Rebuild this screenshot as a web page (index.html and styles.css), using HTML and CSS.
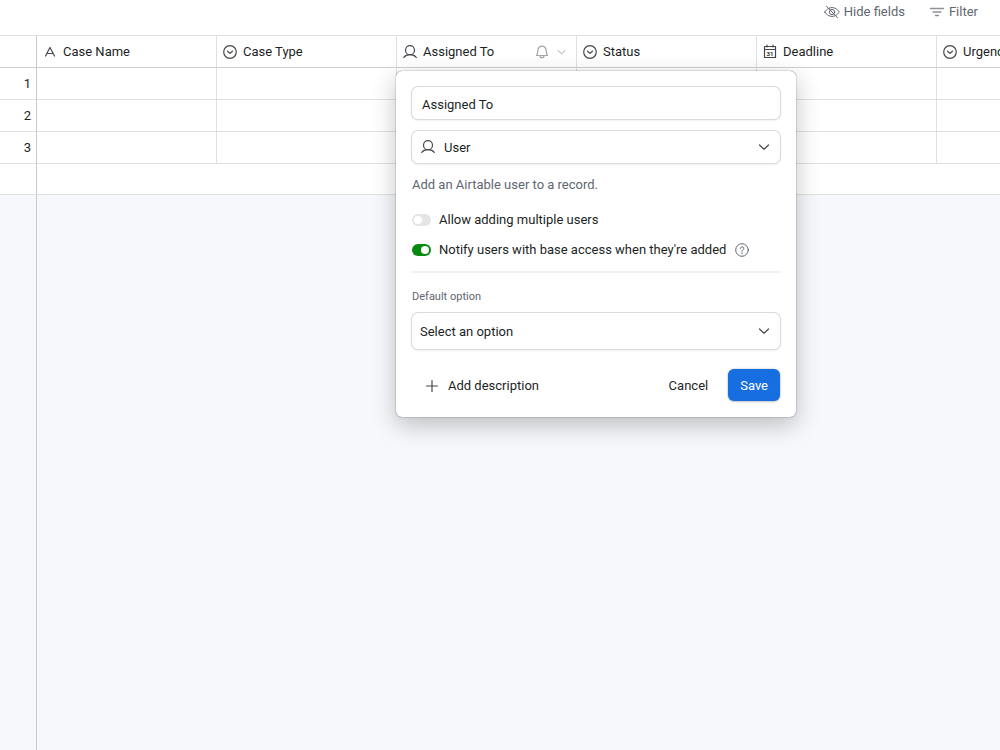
FILE: index.html
```html
<!DOCTYPE html>
<html lang="en">
<head>
    <meta charset="UTF-8">
    <meta name="viewport" content="width=device-width, initial-scale=1.0">
    <title>Cases</title>
    <link rel="stylesheet" href="styles.css">
</head>
<body>
    <!-- shared icons -->
    <svg class="sprite" aria-hidden="true">
        <symbol id="icon-select" viewBox="0 0 16 16">
            <circle cx="8" cy="8" r="6.3"/>
            <path d="M5.5 7.2 8 9.4l2.5-2.2"/>
        </symbol>
        <symbol id="icon-user" viewBox="0 0 16 16">
            <circle cx="8" cy="6.2" r="4.5"/>
            <path d="M1.7 13.5C3 11.6 5.2 10.7 8 10.7s5 .9 6.3 2.8"/>
        </symbol>
        <symbol id="icon-chevron" viewBox="0 0 16 16">
            <path d="M3.5 6 8 10.2 12.5 6"/>
        </symbol>
    </svg>

    <header class="toolbar">
        <button class="tool">
            <svg class="icon" viewBox="0 0 16 16">
                <path d="M.8 8S3.2 3.6 8 3.6 15.2 8 15.2 8 12.8 12.4 8 12.4.8 8 .8 8z"/>
                <circle cx="8" cy="8" r="2.6"/>
                <path d="m2.5 2.2 11 11.6"/>
            </svg>
            Hide fields
        </button>
        <button class="tool">
            <svg class="icon icon-filter" viewBox="0 0 16 16">
                <path d="M1.5 4.5h13M4 8h8M6.500 11.500h3"/>
            </svg>
            Filter
        </button>
    </header>

    <main class="grid">
        <table class="records">
            <thead>
                <tr>
                    <th class="num"></th>
                    <th>
                        <div class="field">
                            <svg class="icon" viewBox="0 0 16 16"><path d="M3.5 12 8 3.5l4.5 8.5M5 9.5h6"/></svg>
                            <span>Case Name</span>
                        </div>
                    </th>
                    <th>
                        <div class="field">
                            <svg class="icon"><use href="#icon-select"/></svg>
                            <span>Case Type</span>
                        </div>
                    </th>
                    <th>
                        <div class="field">
                            <svg class="icon"><use href="#icon-user"/></svg>
                            <span>Assigned To</span>
                            <svg class="icon icon-light icon-end" viewBox="0 0 16 16">
                                <path d="M2.5 11.5c.8-1 1.3-2.2 1.3-5A4.2 4.2 0 0 1 8 2.2a4.2 4.2 0 0 1 4.2 4.3c0 2.8.5 4 1.3 5zM6 11.7a2 2 0 0 0 4 0"/>
                            </svg>
                            <svg class="icon icon-light icon-small"><use href="#icon-chevron"/></svg>
                        </div>
                    </th>
                    <th>
                        <div class="field">
                            <svg class="icon"><use href="#icon-select"/></svg>
                            <span>Status</span>
                        </div>
                    </th>
                    <th>
                        <div class="field">
                            <svg class="icon icon-date" viewBox="0 0 16 16">
                                <path d="M2.5 2.5h11v11h-11zM2.5 5.5h11M5 1v2M11 1v2"/>
                                <text x="8" y="11.6" text-anchor="middle">31</text>
                            </svg>
                            <span>Deadline</span>
                        </div>
                    </th>
                    <th>
                        <div class="field">
                            <svg class="icon"><use href="#icon-select"/></svg>
                            <span>Urgency</span>
                        </div>
                    </th>
                </tr>
            </thead>
            <tbody>
                <tr><td class="num">1</td><td></td><td></td><td></td><td></td><td></td><td></td></tr>
                <tr><td class="num">2</td><td></td><td></td><td></td><td></td><td></td><td></td></tr>
                <tr><td class="num">3</td><td></td><td></td><td></td><td></td><td></td><td></td></tr>
                <tr class="add-row"><td class="num"></td><td colspan="6"></td></tr>
            </tbody>
        </table>
        <div class="gutter"></div>

        <form class="popover">
            <input class="control" type="text" value="Assigned To" aria-label="Field name">

            <div class="select-wrap">
                <svg class="icon select-icon"><use href="#icon-user"/></svg>
                <select class="control has-icon" aria-label="Field type">
                    <option>User</option>
                </select>
                <svg class="icon select-arrow"><use href="#icon-chevron"/></svg>
            </div>

            <p class="hint">Add an Airtable user to a record.</p>

            <div class="toggle-row">
                <input class="toggle" type="checkbox" id="multiple">
                <label for="multiple">Allow adding multiple users</label>
            </div>
            <div class="toggle-row">
                <input class="toggle" type="checkbox" id="notify" checked>
                <label for="notify">Notify users with base access when they're added</label>
                <svg class="icon icon-help" viewBox="0 0 16 16">
                    <circle cx="8" cy="8" r="6.3"/>
                    <path d="M6.2 6.5a1.8 1.7 0 1 1 2.7 1.5c-.6.3-.9.6-.9 1.3M8 10.8v1"/>
                </svg>
            </div>

            <hr class="divider">

            <label class="caption" for="default-option">Default option</label>
            <div class="select-wrap">
                <select class="control control-large" id="default-option">
                    <option>Select an option</option>
                </select>
                <svg class="icon select-arrow"><use href="#icon-chevron"/></svg>
            </div>

            <div class="actions">
                <button type="button" class="btn btn-add">
                    <svg class="icon" viewBox="0 0 16 16"><path d="M8 2.5v11M2.5 8h11"/></svg>
                    Add description
                </button>
                <button type="button" class="btn">Cancel</button>
                <button type="submit" class="btn btn-primary">Save</button>
            </div>
        </form>
    </main>
</body>
</html>
```
FILE: styles.css
```css
* {
    padding: 0;
    margin: 0;
    box-sizing: border-box;
}

body {
    min-height: 100vh;
    display: flex;
    flex-direction: column;
    background: #f6f8fc;
    color: #1d1f25;
    font-family: "Segoe UI", Roboto, sans-serif;
    font-size: 13px;
    line-height: 20px;
}

button, input, select {
    font: inherit;
    color: inherit;
    border: none;
    background: none;
}

.sprite {
    display: none;
}

.icon {
    width: 16px;
    height: 16px;
    flex-shrink: 0;
    fill: none;
    stroke: #45474c;
    stroke-width: 1.2;
    stroke-linecap: round;
    stroke-linejoin: round;
}

/* toolbar */
.toolbar {
    height: 35px;
    padding: 2px 22px 0 0;
    display: flex;
    align-items: flex-start;
    justify-content: flex-end;
    gap: 24px;
    background: #fff;
}

.tool {
    display: flex;
    align-items: center;
    gap: 4px;
    color: #616670;
}

.tool .icon {
    stroke: #616670;
    stroke-width: 1;
}

.tool .icon-filter {
    stroke: #8e9197;
    stroke-width: 1.3;
}

/* records table */
.grid {
    position: relative;
    flex: 1;
    display: flex;
    flex-direction: column;
    overflow: hidden;
}

.records {
    width: 1117px;
    table-layout: fixed;
    border-collapse: separate;
    border-spacing: 0;
    border-top: 1px solid #dde0e3;
    background: #fff;
}

.records th,
.records td {
    width: 180px;
    height: 32px;
    border-right: 1px solid #dde0e3;
    border-bottom: 1px solid #dde0e3;
    font-weight: 400;
    text-align: left;
}

.records th {
    border-bottom-color: #cdcfd3;
}

.records .num {
    width: 37px;
    padding-right: 5px;
    border-right-color: #c7c9cd;
    text-align: right;
}

.records .add-row td {
    height: 31px;
}

.field {
    display: flex;
    align-items: center;
    gap: 5px;
    padding: 0 8px 0 5px;
}

.icon-end {
    margin-left: auto;
}

.icon-light {
    stroke: #a3a6ab;
}

.icon-small {
    width: 13px;
}

.icon-date text {
    font-size: 6px;
    font-weight: 700;
    fill: #1d1f25;
    stroke: none;
}

.gutter {
    width: 37px;
    flex: 1;
    border-right: 1px solid #c7c9cd;
}

/* field editor */
.popover {
    position: absolute;
    top: 36px;
    left: 396px;
    width: 400px;
    padding: 16px;
    border-radius: 6px;
    background: #fff;
    box-shadow: 0 0 1px rgba(0, 0, 0, .5), 0 0 2px rgba(0, 0, 0, .2), 0 8px 24px rgba(0, 0, 0, .24);
}

.control {
    display: block;
    width: 100%;
    height: 32px;
    padding: 2px 10px 0;
    border-radius: 6px;
    background: #fff;
    box-shadow: 0 0 0 1px #d9dadc, 0 1px 3px rgba(0, 0, 0, .12);
    appearance: none;
    outline: none;
}

.control.has-icon {
    padding-left: 32px;
}

.control.control-large {
    height: 36px;
    padding-left: 8px;
}

.control + .select-wrap {
    margin-top: 12px;
}

.select-wrap {
    position: relative;
    display: flex;
    align-items: center;
}

.select-icon,
.select-arrow {
    position: absolute;
    pointer-events: none;
}

.select-icon {
    left: 8px;
}

.select-arrow {
    right: 8px;
}

.hint {
    margin: 12px 0 15px;
    color: #616670;
}

.toggle-row {
    display: flex;
    align-items: center;
    gap: 8px;
    margin-bottom: 10px;
}

.toggle {
    width: 19px;
    height: 12px;
    padding: 2px;
    display: flex;
    border-radius: 6px;
    background: #e5e5e5;
    appearance: none;
}

.toggle::before {
    content: "";
    width: 8px;
    height: 8px;
    border-radius: 50%;
    background: #fff;
}

.toggle:checked {
    justify-content: flex-end;
    background: #048a0e;
}

.icon-help {
    stroke: #616670;
    stroke-width: 1;
}

.divider {
    height: 2px;
    margin: 11px 0 16px;
    border: none;
    background: #f2f2f2;
}

.caption {
    display: block;
    margin-bottom: 8px;
    font-size: 11px;
    line-height: 16px;
    color: #616670;
}

.actions {
    display: flex;
    gap: 8px;
    margin-top: 20px;
}

.btn {
    height: 32px;
    padding: 2px 12px 0;
    border-radius: 6px;
    cursor: pointer;
}

.btn-add {
    display: flex;
    align-items: center;
    gap: 8px;
    margin-right: auto;
}

.btn-primary {
    background: #166ee1;
    color: #fff;
    box-shadow: 0 0 2px rgba(0, 0, 0, .3), 0 1px 2px rgba(0, 0, 0, .15);
}
```
